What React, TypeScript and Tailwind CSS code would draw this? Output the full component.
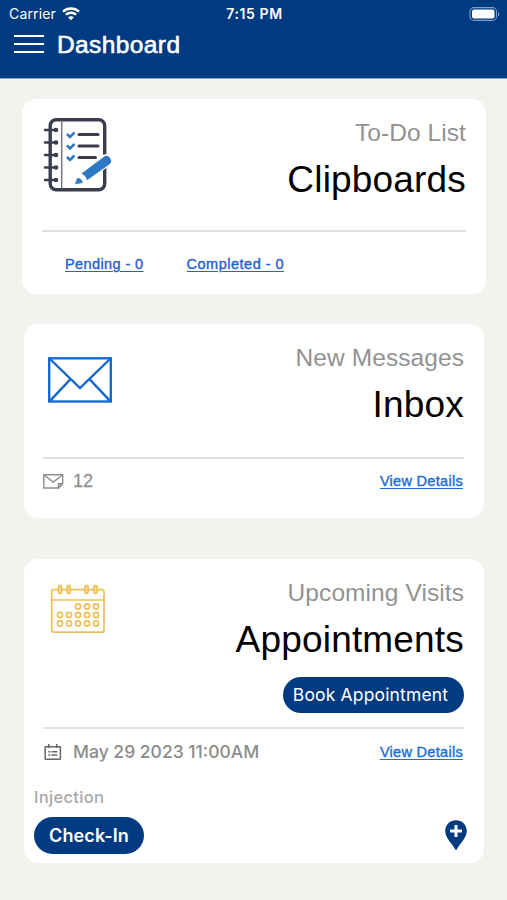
import type { ReactNode } from 'react';

const helvetica = "font-['Liberation_Sans',Arial,sans-serif]";
const inter = 'font-[Inter,sans-serif]';

function StatusBar() {
  return (
    <div className={`flex h-[28px] items-center justify-between pl-[9px] pr-[7px] text-white ${inter}`}>
      <div className="flex w-[180px] items-center gap-[6px]">
        <span className="text-[14px] leading-none tracking-[0.15px]">Carrier</span>
        <svg width="18" height="14" viewBox="0 0 18 14" fill="none" stroke="white" strokeWidth="2.400">
          <path d="M1 4.600C5.500 .5 12.500 .5 17 4.600" />
          <path d="M3.900 7.700C6.800 5.100 11.200 5.100 14.100 7.700" />
          <path d="M9 13.300L6.100 10.300C7.700 8.900 10.300 8.900 11.900 10.300Z" fill="white" stroke="none" />
        </svg>
      </div>
      <span className="text-[14px] font-semibold leading-[16px] tracking-[0.6px]">7:15 PM</span>
      <div className="flex w-[180px] justify-end">
        <svg width="31" height="14" viewBox="0 0 31 14" fill="none">
          <rect x="1" y=".6" width="26.500" height="12.800" rx="4" stroke="#7f9ec3" strokeWidth="1.100" />
          <rect x="3" y="2.500" width="22.500" height="9" rx="2.200" fill="white" />
          <path d="M29 5v4.500c1.800-.8 1.800-3.700 0-4.500z" fill="#7f9ec3" />
        </svg>
      </div>
    </div>
  );
}

function NotebookIcon() {
  return (
    <svg className="ml-px" width="70" height="74" viewBox="0 0 70 74" fill="none" strokeLinecap="round">
      <rect x="7.200" y="1.800" width="54.500" height="70" rx="6" stroke="#3a3d4d" strokeWidth="3.400" />
      <path d="M18.700 3v67" stroke="#777985" strokeWidth="1.500" />
      {[12, 24.5, 37, 49.5, 62].map((y) => (
        <g key={y}>
          <path d={`M2 ${y}h11`} stroke="#3a3d4d" strokeWidth="2.400" />
          <circle cx="13" cy={y} r="2.300" fill="#3a3d4d" />
        </g>
      ))}
      {[16.5, 28, 39.5].map((y, i) => (
        <g key={y}>
          <path d={`M24 ${y - 0.5}l3 3 4.500-4.500`} stroke="#2d78c2" strokeWidth="2.500" strokeLinecap="butt" />
          <path d={`M36 ${y}h${i === 2 ? 16.5 : 19}`} stroke="#3a3d4d" strokeWidth="3" />
        </g>
      ))}
      <path
        d="M31 66.500L35.500 53 59 37.500Q64 34.500 68 39Q71 44 67.500 47L45 63Z"
        fill="white"
      />
      <path d="M38.500 55.500L61 38.700Q64.500 36.500 67 40Q69.700 43.700 66.500 46.200L44 62.300Q43 57.500 38.500 55.500Z" fill="#2d78c2" />
      <path d="M34.800 60.200Q38.500 60.700 39.500 64.500L32.700 65.800Z" fill="#2d78c2" stroke="#2d78c2" strokeWidth=".8" />
    </svg>
  );
}

function EnvelopeIcon() {
  return (
    <svg width="64" height="46" viewBox="0 0 64 46" fill="none" stroke="#1769d2" strokeWidth="2.400">
      <rect x="1.200" y="1.300" width="61.600" height="43.200" />
      <path d="M1.500 1.500L32 31 62.500 1.500M1.500 44.300L22.500 22.200M62.500 44.300L41.500 22.200" />
    </svg>
  );
}

function CalendarIcon() {
  const dots = [
    [28, 37, 46],
    [10, 19, 28, 37, 46],
    [10, 19, 28, 37, 46],
  ];
  return (
    <svg width="56" height="50" viewBox="0 0 56 50" fill="none" stroke="#ecc158" strokeWidth="1.700">
      <rect x="1.700" y="5.700" width="52.300" height="42.500" rx="2" />
      <path d="M1.700 16h52.300" />
      {[10, 18.7, 36.5, 45.5].map((x) => (
        <rect key={x} x={x - 1.6} y="1.400" width="3.200" height="8.200" rx="1.600" fill="#f5dda2" />
      ))}
      {dots.map((row, i) =>
        row.map((x) => <circle key={`${i}-${x}`} cx={x} cy={22.5 + i * 8.5} r="2.600" />)
      )}
    </svg>
  );
}

function SmallMailIcon() {
  return (
    <svg width="21" height="15" viewBox="0 0 21 15" fill="none" stroke="#8d8d8d" strokeWidth="1.400">
      <path d="M19.700 9V.8H.8V14H15.500L19.700 9.500" />
      <path d="M1 1l9.300 7L19.500 1M15.500 14v-4.300h4z" />
    </svg>
  );
}

function SmallCalendarIcon() {
  return (
    <svg width="18" height="17" viewBox="0 0 18 17" fill="none" stroke="#666" strokeWidth="1.500">
      <rect x="1.200" y="2.700" width="15.200" height="12.600" rx=".5" />
      <path d="M4.800 0v4M12.800 0v4M4.300 7.700h2M7.500 7.700h5.800M4.300 11h2M7.500 11h5.800" />
    </svg>
  );
}

function LocationIcon() {
  return (
    <svg width="22" height="31" viewBox="0 0 22 31">
      <path d="M11 .3C5 .3 .2 5 .2 10.900C.2 18 7 23 11 30.500C15 23 21.800 18 21.800 10.900C21.800 5 17 .3 11 .3Z" fill="#003b82" />
      <path d="M11 5v12M5 11h12" stroke="white" strokeWidth="3" />
    </svg>
  );
}

interface CardHeaderProps {
  icon: ReactNode;
  label: string;
  title: string;
}

function CardHeader({ icon, label, title }: CardHeaderProps) {
  return (
    <div className="flex items-start justify-between">
      {icon}
      <div className="flex flex-col items-end whitespace-nowrap">
        <span className="text-[24.500px] leading-[30px] tracking-[0.08px] text-[#929292]">{label}</span>
        <span className="mt-[10px] text-[37px] leading-[44px] tracking-[0.18px] text-black">{title}</span>
      </div>
    </div>
  );
}

function ViewDetails() {
  return (
    <a href="#" className="text-[14.500px] leading-5 tracking-[0.3px] text-[#1b6fd6] underline underline-offset-2 [-webkit-text-stroke:0.4px]">
      View Details
    </a>
  );
}

export default function App() {
  return (
    <div className={`h-[900px] w-[507px] overflow-hidden bg-[#f3f2ee] ${helvetica}`}>
      <header className="h-[79px] border-b border-[#8fa6c2] bg-[#003b82] text-white">
        <StatusBar />
        <div className="flex h-8 items-center pl-[14px]">
          <div className="flex w-[30px] flex-col gap-[6px]">
            <div className="h-[2px] bg-white" />
            <div className="h-[2px] bg-white" />
            <div className="h-[2px] bg-white" />
          </div>
          <h1 className="ml-[13px] pt-[2px] text-[24.500px] leading-8 tracking-[0.4px] [-webkit-text-stroke:0.6px]">Dashboard</h1>
        </div>
      </header>

      {/* Clipboards */}
      <section className="ml-[22px] mt-[20px] h-[195px] w-[464px] rounded-[14px] bg-white pl-[20px] pr-[20px] pt-[19px]">
        <div className="h-[112px]">
          <CardHeader icon={<NotebookIcon />} label="To-Do List" title="Clipboards" />
        </div>
        <div className="h-[2px] bg-[#e0e0e0]" />
        <div className="mt-[22px] flex gap-[43px] pl-[23px] text-[14.500px] leading-5 text-[#2a5fce] [-webkit-text-stroke:0.4px]">
          <a href="#" className="tracking-[0.4px] underline underline-offset-2">Pending - 0</a>
          <a href="#" className="tracking-[0.5px] underline underline-offset-2">Completed - 0</a>
        </div>
      </section>

      {/* Inbox */}
      <section className="ml-[24px] mt-[30px] h-[194px] w-[460px] rounded-[14px] bg-white pl-[19px] pr-[20px] pt-[19px]">
        <div className="h-[114px]">
          <CardHeader icon={<div className="ml-[5px] mt-[14px]"><EnvelopeIcon /></div>} label="New Messages" title="Inbox" />
        </div>
        <div className="h-[2px] bg-[#e0e0e0]" />
        <div className="mt-[12px] flex items-center justify-between pr-px">
          <div className="flex items-center gap-[9px]">
            <SmallMailIcon />
            <span className="text-[18px] leading-5 text-[#909090] [-webkit-text-stroke:0.3px]">12</span>
          </div>
          <ViewDetails />
        </div>
      </section>

      {/* Appointments */}
      <section className="ml-[24px] mt-[41px] h-[304px] w-[460px] rounded-[14px] bg-white pl-[10px] pr-[20px] pt-[19px]">
        <div className="h-[99px] pl-[16px]">
          <CardHeader icon={<div className="mt-[6px]"><CalendarIcon /></div>} label="Upcoming Visits" title="Appointments" />
        </div>
        <div className="flex justify-end">
          <button className={`h-[36px] w-[181px] rounded-full bg-[#003b82] pr-[6px] text-[17.500px] tracking-[0.15px] text-white ${inter}`}>
            Book Appointment
          </button>
        </div>
        <div className="ml-[9px] mt-[14px] h-[2px] bg-[#e0e0e0]" />
        <div className="mt-[13px] flex items-center justify-between pl-[10px] pr-px">
          <div className="flex items-center gap-[11px]">
            <SmallCalendarIcon />
            <span className={`text-[17.500px] font-medium leading-5 text-[#8c8c8c] ${inter}`}>May 29 2023 11:00AM</span>
          </div>
          <ViewDetails />
        </div>
        <div className={`mt-[25px] text-[16.500px] font-medium leading-5 tracking-[0.3px] text-[#a8a8a8] ${inter}`}>Injection</div>
        <div className="mt-[10px] flex items-center justify-between">
          <button className={`h-[37px] w-[110px] rounded-full bg-[#003b82] text-[18px] font-semibold tracking-[0.1px] text-white ${inter}`}>
            Check-In
          </button>
          <div className="-mr-[3px]">
            <LocationIcon />
          </div>
        </div>
      </section>
    </div>
  );
}
